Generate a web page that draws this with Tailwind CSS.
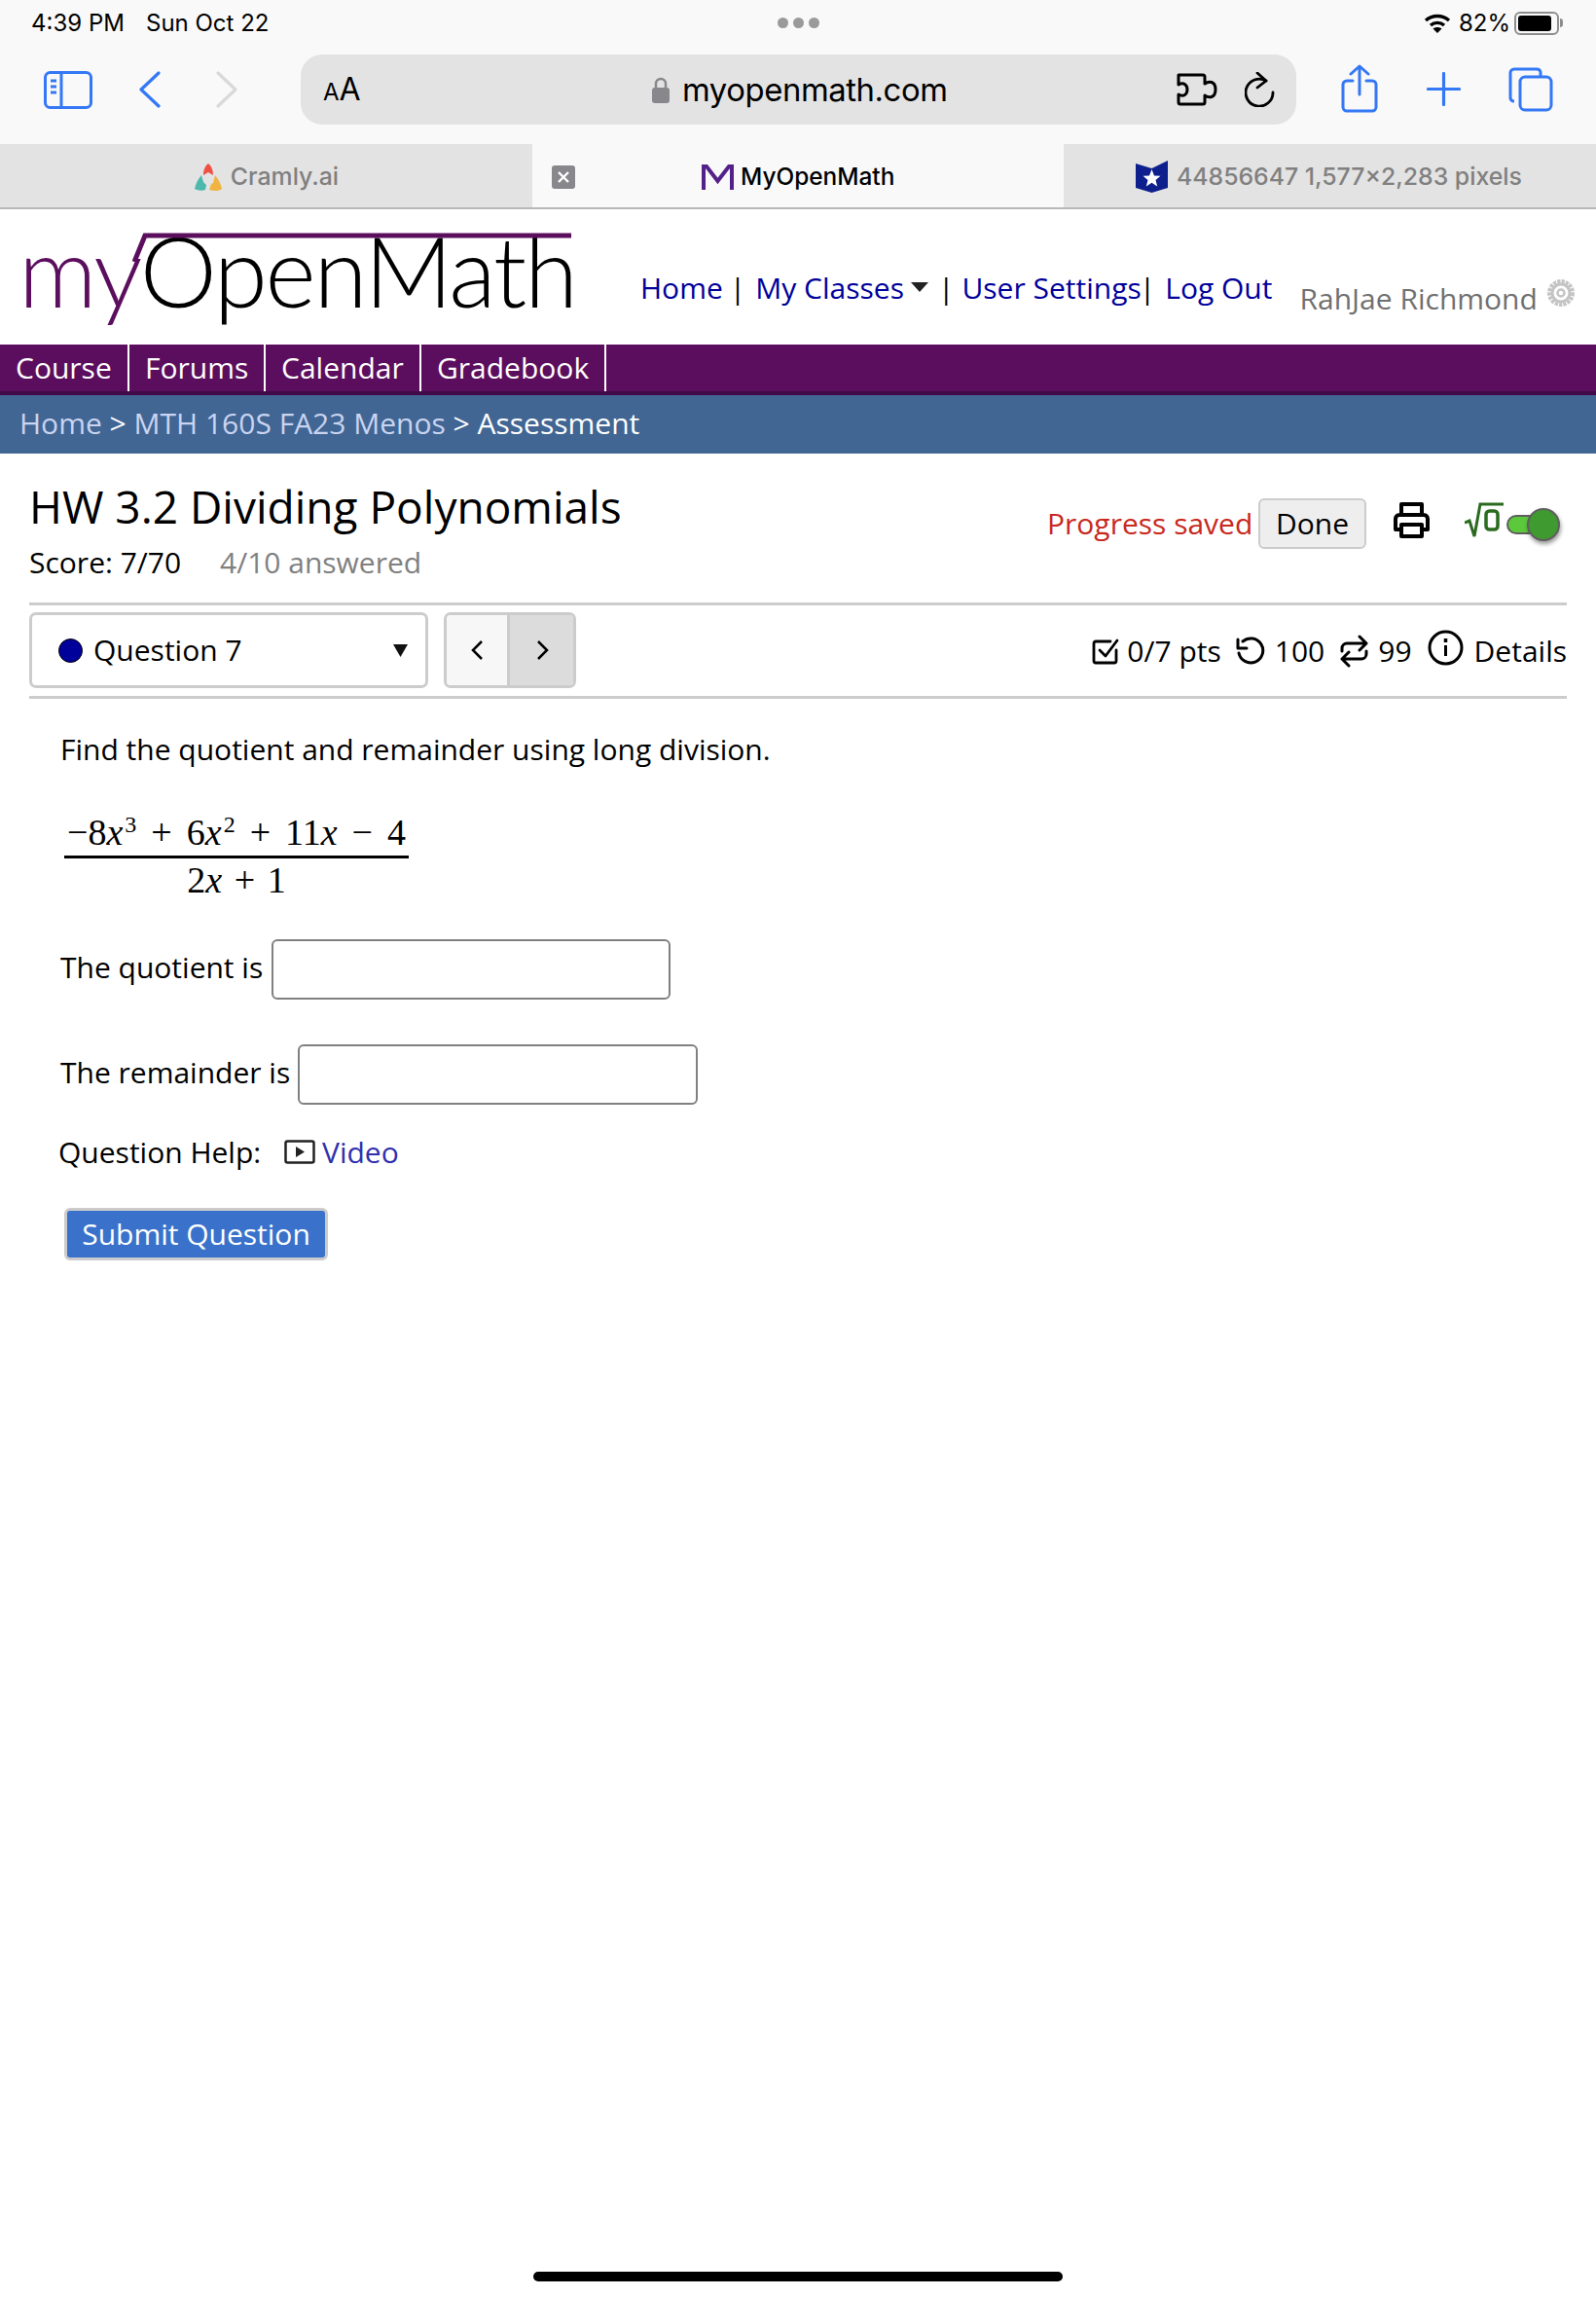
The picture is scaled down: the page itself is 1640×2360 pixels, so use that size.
<!DOCTYPE html>
<html lang="en">
<head>
<meta charset="UTF-8" />
<title>MyOpenMath</title>
<script src="https://cdn.jsdelivr.net/npm/@tailwindcss/browser@4"></script>
</head>
<body class="bg-white">
<div class="relative w-[1640px] h-[2360px] overflow-hidden font-['Open_Sans',sans-serif] text-[30px] text-black">

  <!-- safari chrome -->
  <div class="bg-[#f9f9f9] font-['Inter',sans-serif]">
    <div class="h-[46px] flex items-center text-[24px] pl-[32px] pr-[32px] pt-[1px]">
      <span class="w-[118px] whitespace-nowrap">4:39 PM</span>
      <span class="w-[649px] whitespace-nowrap">Sun Oct 22</span>
      <div class="flex gap-[5px] w-[664px]">
        <span class="w-[11px] h-[11px] rounded-full bg-[#9a9a9a]"></span>
        <span class="w-[11px] h-[11px] rounded-full bg-[#9a9a9a]"></span>
        <span class="w-[11px] h-[11px] rounded-full bg-[#9a9a9a]"></span>
      </div>
      <svg class="w-[28px] h-[22px]" viewBox="0 0 28 22" fill="none" stroke="#000" stroke-width="3.4">
        <path d="M2 8c7-6 17-6 24 0M7 13c4-3.500 10-3.500 14 0" />
        <path d="M14 21l-4.500-4.500c2.500-2 6.500-2 9 0z" fill="#000" stroke="none" />
      </svg>
      <span class="ml-[8px] w-[57px]">82%</span>
      <div class="w-[46px] h-[24px] rounded-[6px] border-2 border-[#8e8e8e] p-[2px]">
        <div class="w-[34px] h-full rounded-[3px] bg-black"></div>
      </div>
      <span class="w-[3px] h-[9px] bg-[#8e8e8e] rounded-r-full ml-[1px]"></span>
    </div>

    <div class="h-[102px] pt-[10px] flex items-start">
      <svg class="ml-[45px] mt-[17px] w-[50px] h-[39px]" viewBox="0 0 50 39" fill="none" stroke="#3478f6" stroke-width="3">
        <rect x="1.500" y="1.500" width="47" height="36" rx="5" />
        <path d="M18 1.500v36M7 10h6M7 16h6M7 22h6" />
      </svg>
      <svg class="ml-[47px] mt-[17px] w-[24px] h-[38px]" viewBox="0 0 24 38" fill="none" stroke="#3478f6" stroke-width="3.200" stroke-linecap="round" stroke-linejoin="round">
        <path d="M21 2L3 19l18 17" />
      </svg>
      <svg class="ml-[55px] mt-[17px] w-[24px] h-[38px]" viewBox="0 0 24 38" fill="none" stroke="#d9d9d9" stroke-width="3.200" stroke-linecap="round" stroke-linejoin="round">
        <path d="M3 2l18 17L3 36" />
      </svg>

      <div class="ml-[64px] w-[1023px] h-[72px] rounded-[22px] bg-[#e3e3e3] flex items-center">
        <span class="ml-[23px] w-[338px] text-[32px] leading-none"><span class="text-[24px]">A</span>A</span>
        <svg class="w-[18px] h-[28px]" viewBox="0 0 18 28">
          <path d="M4 13V8a5 5 0 0 1 10 0v5" fill="none" stroke="#88888c" stroke-width="2.500" />
          <rect x="0" y="12" width="18" height="16" rx="3" fill="#88888c" />
        </svg>
        <span class="ml-[13px] w-[508px] text-[32.800px] tracking-[-0.4px] pt-[1px]">myopenmath.com</span>
        <svg class="w-[42px] h-[34px]" viewBox="0 0 42 34" fill="none" stroke="#000" stroke-width="3" stroke-linejoin="round">
          <path d="M2 2h25a2 2 0 0 1 2 2v7c4-3 11-3 11 6s-7 9-11 6v7a2 2 0 0 1-2 2H4a2 2 0 0 1-2-2v-8c5 3 9 0 9-5s-4-8-9-5z" />
        </svg>
        <svg class="ml-[28px] w-[32px] h-[36px]" viewBox="0 0 32 36" fill="none" stroke="#000" stroke-width="2.800" stroke-linecap="round" stroke-linejoin="round">
          <path d="M22 9A14 14 0 1 0 29 21" />
          <path d="M13 1l9 8-9 7" />
        </svg>
      </div>

      <svg class="ml-[46px] mt-[10px] w-[38px] h-[50px]" viewBox="0 0 38 50" fill="none" stroke="#3478f6" stroke-width="3" stroke-linecap="round" stroke-linejoin="round">
        <path d="M12 17H6a4 4 0 0 0-4 4v23a4 4 0 0 0 4 4h26a4 4 0 0 0 4-4V21a4 4 0 0 0-4-4h-6" />
        <path d="M19 31V2M10 10l9-8 9 8" />
      </svg>
      <svg class="ml-[50px] mt-[18px] w-[35px] h-[35px]" viewBox="0 0 35 35" fill="none" stroke="#3478f6" stroke-width="3.200" stroke-linecap="round">
        <path d="M17.500 1.500v32M1.500 17.500h32" />
      </svg>
      <svg class="ml-[49px] mt-[13px] w-[46px] h-[46px]" viewBox="0 0 46 46" fill="none" stroke="#3478f6" stroke-width="3">
        <path d="M6 35H5a4 4 0 0 1-3-4V6a4 4 0 0 1 4-4h23a4 4 0 0 1 4 3v4" />
        <rect x="12" y="10" width="32" height="34" rx="5" />
      </svg>
    </div>

    <div class="h-[67px] flex text-[24.800px] font-medium border-b-2 border-[#b8b8b8]">
      <div class="w-[547px] bg-[#e3e3e3] text-[#808080] flex items-center justify-center gap-[8px] pt-[2px]">
        <svg class="w-[30px] h-[30px]" viewBox="0 0 30 30">
          <path d="M15 1c4 3 5 8 5 12l-5-3-5 3c0-4 1-9 5-12z" fill="#ee5044" />
          <path d="M8 13c-4 5-6 9-7 14 3 2 8 2 11 1l1-5-3-3z" fill="#4db8ab" />
          <path d="M22 13c4 5 6 9 7 14-4 3-9 2-13 1l2-6 2-1z" fill="#efb442" />
        </svg>
        Cramly.ai
      </div>
      <div class="w-[546px] bg-[#f9f9f9] flex items-center pl-[20px] pt-[2px]">
        <span class="w-[24px] h-[24px] rounded-[3px] bg-[#88888c] text-white flex items-center justify-center">
          <svg class="w-[12px] h-[12px]" viewBox="0 0 12 12" stroke="#fff" stroke-width="2.400"><path d="M1 1l10 10M11 1L1 11" /></svg>
        </span>
        <svg class="ml-[130px] w-[33px] h-[26px]" viewBox="0 0 33 26" fill="none" stroke="#54218a" stroke-width="4">
          <path d="M2 26V2h3l11.500 15L28 2h3v24" />
        </svg>
        <span class="ml-[7px] text-[24.400px]">MyOpenMath</span>
      </div>
      <div class="w-[547px] bg-[#e3e3e3] text-[#808080] flex items-center pl-[74px] pt-[2px]">
        <svg class="w-[33px] h-[33px]" viewBox="0 0 33 33">
          <path d="M0 3l16.500 5L33 0v28l-16.500 5L0 28z" fill="#0c1f8c" />
          <path d="M16.500 9l2.500 6.500 6.500.3-5 4.200 1.700 6.500-5.700-3.700-5.700 3.700 1.700-6.500-5-4.200 6.500-.3z" fill="#fff" />
        </svg>
        <span class="ml-[9px] whitespace-nowrap">44856647 1,577×2,283 pixels</span>
      </div>
    </div>
  </div>

  <!-- site header -->
  <div class="h-[139px] flex">
    <div class="relative ml-[19px] w-[570px] font-['Lato',sans-serif] text-[100px] leading-none pt-[12px] tracking-[-2.200px] font-light whitespace-nowrap">
      <span class="text-[#5c0e5e]">my</span><span>OpenMath</span>
      <svg class="absolute left-[117px] top-[22px] w-[454px] h-[32px]" viewBox="0 0 454 32" fill="none" stroke="#5c0e5e" stroke-width="5">
        <path d="M2 32L13 5H451" />
      </svg>
    </div>
    <div class="ml-[69px] mt-[57px] flex h-[46px] items-center text-[#00009b] whitespace-nowrap">
      <span>Home</span>
      <span class="ml-[7px] text-black">|</span>
      <span class="ml-[10px]">My Classes</span>
      <svg class="ml-[7px] w-[18px] h-[10px]" viewBox="0 0 18 10"><path d="M0 0h18L9 10z" fill="#222" /></svg>
      <span class="ml-[10px] text-black">|</span>
      <span class="ml-[8px]">User Settings</span>
      <span class="-ml-[2px] text-black">|</span>
      <span class="ml-[10px]">Log Out</span>
    </div>
    <div class="ml-[28px] mt-[68px] flex h-[46px] items-center text-[#707070] whitespace-nowrap">
      <span>RahJae Richmond</span>
      <svg class="ml-[8px] -mt-[10px] w-[32px] h-[32px]" viewBox="0 0 32 32" fill="none" stroke="#c4c4c4">
        <circle cx="16" cy="16" r="11" stroke-width="6" stroke-dasharray="3 1" />
        <circle cx="16" cy="16" r="9" stroke-width="3" />
        <circle cx="16" cy="16" r="3.500" stroke-width="2.500" />
      </svg>
    </div>
  </div>

  <!-- course nav -->
  <div class="h-[52px] bg-[#5c0e5e] border-b-4 border-[#3f0a47] flex text-white">
    <span class="w-[133px] h-[48px] border-r-2 border-white pl-[16px] leading-[48px]">Course</span>
    <span class="w-[140px] h-[48px] border-r-2 border-white pl-[16px] leading-[48px]">Forums</span>
    <span class="w-[160px] h-[48px] border-r-2 border-white pl-[16px] leading-[48px]">Calendar</span>
    <span class="w-[190px] h-[48px] border-r-2 border-white pl-[16px] leading-[48px]">Gradebook</span>
  </div>
  <div class="h-[60px] bg-[#416694] pl-[20px] leading-[58px] text-white whitespace-nowrap">
    <span class="text-[#c9d4f0]">Home</span> &gt; <span class="text-[#c9d4f0]">MTH 160S FA23 Menos</span> &gt; Assessment
  </div>

  <!-- assessment header -->
  <div class="mx-[30px] w-[1580px]">
    <div class="h-[156px] flex border-b-[3px] border-[#cccccc]">
      <div class="w-[1046px]">
        <h1 class="text-[46px] leading-[64px] mt-[22px]">HW 3.2 Dividing Polynomials</h1>
        <div class="flex mt-[4px] leading-[44px]">
          <span class="w-[196px]">Score: 7/70</span>
          <span class="text-[#808080]">4/10 answered</span>
        </div>
      </div>
      <div class="flex items-start mt-[46px]">
        <span class="text-[#c8281e] leading-[52px] w-[217px] whitespace-nowrap">Progress saved</span>
        <span class="w-[111px] h-[52px] rounded-[6px] bg-[#eeeeee] border-2 border-[#cccccc] text-center leading-[48px]">Done</span>
        <svg class="ml-[28px] mt-[4px] w-[37px] h-[37px]" viewBox="0 0 37 37" fill="none" stroke="#000" stroke-width="4" stroke-linejoin="round">
          <path d="M8 13V2h21v11M8 28H2V17a4 4 0 0 1 4-4h25a4 4 0 0 1 4 4v11h-6" />
          <rect x="8" y="23" width="21" height="12" />
        </svg>
        <svg class="ml-[36px] mt-[4px] w-[40px] h-[38px]" viewBox="0 0 40 38" fill="none" stroke="#2b6b1f" stroke-width="3">
          <path d="M0 21l5-2 5 16 6-33h24" />
          <rect x="22" y="9" width="12" height="19" rx="3.500" stroke-width="3.500" />
        </svg>
        <div class="relative ml-[3px] mt-[10px] w-[55px] h-[34px] flex items-center">
          <div class="w-[42px] h-[20px] rounded-full bg-[#5cc93c] border-2 border-[#5f5f5f]"></div>
          <div class="absolute right-0 top-0 w-[34px] h-[34px] rounded-full bg-[#3f9a2f] border-2 border-[#5f5f5f] shadow-[1px_3px_4px_rgba(0,0,0,0.4)]"></div>
        </div>
      </div>
    </div>

    <div class="h-[96px] flex items-center border-b-[3px] border-[#cccccc]">
      <div class="w-[410px] h-[78px] rounded-[7px] border-[3px] border-[#cccccc] flex items-center pl-[27px] -mt-[1px]">
        <span class="w-[25px] h-[25px] rounded-full bg-[#00009b] border border-black"></span>
        <span class="ml-[11px] w-[308px] whitespace-nowrap pb-[2px]">Question 7</span>
        <svg class="w-[15px] h-[13px]" viewBox="0 0 15 13"><path d="M0 0h15L7.500 13z" fill="#111" /></svg>
      </div>
      <div class="ml-[16px] w-[136px] h-[78px] rounded-[7px] border-[3px] border-[#cccccc] flex overflow-hidden -mt-[1px]">
        <div class="w-[65px] bg-[#f7f7f7] border-r-[3px] border-[#cccccc] flex items-center justify-center">
          <svg class="w-[13px] h-[22px]" viewBox="0 0 13 22" fill="none" stroke="#000" stroke-width="2.500"><path d="M11 2L2 11l9 9" /></svg>
        </div>
        <div class="flex-1 bg-[#dcdcdc] flex items-center justify-center pl-[1px]">
          <svg class="w-[13px] h-[22px]" viewBox="0 0 13 22" fill="none" stroke="#000" stroke-width="2.500"><path d="M2 2l9 9-9 9" /></svg>
        </div>
      </div>
      <div class="ml-auto flex items-center whitespace-nowrap">
        <svg class="w-[28px] h-[28px]" viewBox="0 0 28 28" fill="none" stroke="#000" stroke-width="2.800" stroke-linecap="round" stroke-linejoin="round">
          <path d="M25 13v11a2 2 0 0 1-2 2H4a2 2 0 0 1-2-2V6a2 2 0 0 1 2-2h15" />
          <path d="M8 13l6 6L26 3" />
        </svg>
        <span class="ml-[8px]">0/7 pts</span>
        <svg class="ml-[15px] w-[30px] h-[30px]" viewBox="0 0 30 30" fill="none" stroke="#000" stroke-width="3" stroke-linecap="round" stroke-linejoin="round">
          <path d="M7 5A12.500 12.500 0 1 1 3 17" />
          <path d="M2 3v9h9" />
        </svg>
        <span class="ml-[10px]">100</span>
        <svg class="ml-[16px] w-[29px] h-[34px]" viewBox="0 0 29 34" fill="none" stroke="#000" stroke-width="3" stroke-linecap="round" stroke-linejoin="round">
          <path d="M20 2l7 7-7 7M2 17v-3a5 5 0 0 1 5-5h20M9 32l-7-7 7-7M27 17v3a5 5 0 0 1-5 5H2" />
        </svg>
        <span class="ml-[10px]">99</span>
        <svg class="ml-[16px] -mt-[6px] w-[37px] h-[37px]" viewBox="0 0 37 37" fill="none" stroke="#000" stroke-width="3">
          <circle cx="18.500" cy="18.500" r="16.500" />
          <path d="M18.500 16v11" />
          <path d="M18.500 9v4" stroke-width="3.500" />
        </svg>
        <span class="ml-[11px]">Details</span>
      </div>
    </div>
  </div>

  <!-- question -->
  <div class="pl-[62px]">
    <p class="mt-[30px] leading-[44px]">Find the quotient and remainder using long division.</p>
    <div class="mt-[39px] ml-[4px] w-[354px] font-['Liberation_Serif',serif] text-[38px] text-center whitespace-nowrap">
      <div class="h-[51px] border-b-[3px] border-black leading-[49px] [word-spacing:5.500px]">−8<i>x</i><sup class="text-[24px] -top-[13px] ml-[2px]">3</sup> + 6<i>x</i><sup class="text-[24px] -top-[13px] ml-[2px]">2</sup> + 11<i>x</i> − 4</div>
      <div class="leading-[44px] [word-spacing:3px]">2<i>x</i> + 1</div>
    </div>
    <div class="mt-[39px] flex items-center h-[62px]">
      <span class="w-[217px] pb-[5px]">The quotient is</span>
      <div class="w-[410px] h-[62px] rounded-[6px] border-2 border-[#808080]"></div>
    </div>
    <div class="mt-[46px] flex items-center h-[62px]">
      <span class="w-[244px] pb-[6px]">The remainder is</span>
      <div class="w-[411px] h-[62px] rounded-[6px] border-2 border-[#808080]"></div>
    </div>
    <div class="mt-[26px] flex items-center h-[44px] -ml-[2px]">
      <span class="w-[232px]">Question Help:</span>
      <svg class="w-[32px] h-[25px]" viewBox="0 0 32 25" fill="none" stroke="#222" stroke-width="2.500">
        <rect x="1.500" y="1.500" width="29" height="22" rx="2" />
        <path d="M12 7l9 5.500-9 5.500z" fill="#222" stroke="none" />
      </svg>
      <span class="ml-[7px] text-[#3030ac]">Video</span>
    </div>
    <div class="mt-[36px] ml-[4px] w-[271px] h-[54px] rounded-[6px] bg-[#3a72cb] border-[3px] border-[#cccccc] text-white text-center leading-[48px]">Submit Question</div>
  </div>

  <div class="absolute left-[548px] top-[2334px] w-[544px] h-[10px] rounded-full bg-black"></div>
</div>
</body>
</html>
